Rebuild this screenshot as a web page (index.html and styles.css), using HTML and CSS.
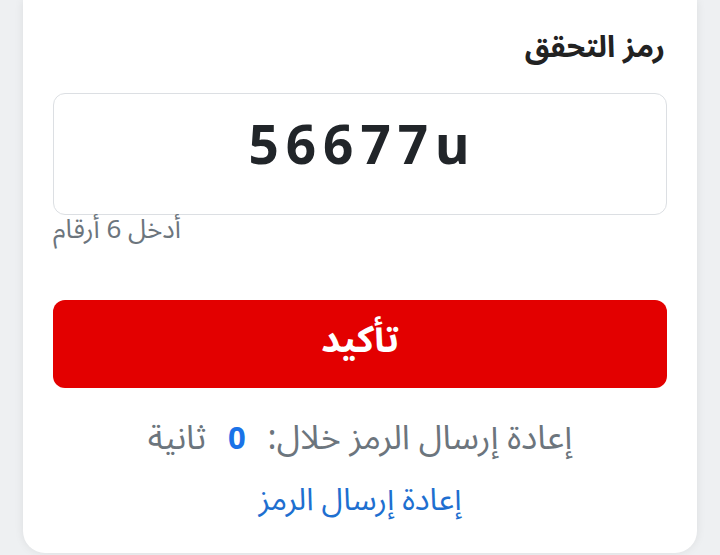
FILE: index.html
```html
<!DOCTYPE html>
<html lang="ar" dir="rtl">
<head>
<meta charset="utf-8">
<title>رمز التحقق</title>
<link rel="stylesheet" href="styles.css">
</head>
<body>
<main class="page">
  <section class="card">
    <label class="label" for="otp">رمز التحقق</label>
    <div class="otp-box">
      <input id="otp" class="otp-input" type="text" value="56677u" dir="ltr">
    </div>
    <div class="hint">أدخل 6 أرقام</div>
    <button class="confirm" type="button">تأكيد</button>
    <p class="timer">إعادة إرسال الرمز خلال: <span class="count">0</span> ثانية</p>
    <a class="resend" href="#">إعادة إرسال الرمز</a>
  </section>
</main>
</body>
</html>
```
FILE: styles.css
```css
* { box-sizing: border-box; }
html, body { margin: 0; padding: 0; }
body {
  background: #eef0f2;
  font-family: "Noto Sans Arabic", "Noto Sans", "DejaVu Sans", sans-serif;
  height: 555px;
  overflow: hidden;
}
.page {
  padding: 0 23px;
}
.card {
  background: #fff;
  border-radius: 0 0 22px 22px;
  box-shadow: 0 0 10px rgba(0,0,0,0.08);
  height: 553px;
  padding: 26px 30px 0;
  display: flex;
  flex-direction: column;
}
.label {
  font-size: 30px;
  font-weight: 700;
  color: #222;
  line-height: 44px;
  padding-right: 2px;
}
.otp-box {
  margin-top: 23px;
  height: 122px;
  border: 1px solid #dcdfe3;
  border-radius: 12px;
  display: flex;
  align-items: center;
  justify-content: center;
  padding-bottom: 21px;
}
.otp-input {
  border: none;
  outline: none;
  width: 100%;
  text-align: center;
  font-family: "Noto Sans", "Open Sans", sans-serif;
  font-size: 53px;
  font-weight: 700;
  letter-spacing: 7px;
  padding-left: 7px;
  color: #212529;
  background: transparent;
}
.hint {
  align-self: flex-end;
  font-size: 26px;
  color: #6c757d;
  line-height: 30px;
}
.confirm {
  margin-top: 55px;
  height: 88px;
  border: none;
  border-radius: 12px;
  background: #e30000;
  color: #fff;
  font-family: inherit;
  font-size: 37px;
  font-weight: 700;
  padding-bottom: 16px;
}
.timer {
  margin: 19px 0 0;
  text-align: center;
  font-family: "Noto Sans", "Noto Sans Arabic", sans-serif;
  font-size: 34px;
  color: #6c757d;
  line-height: 58px;
}
.count {
  color: #1a73e8;
  font-weight: 700;
  font-family: "Noto Sans", sans-serif;
  font-size: 31px;
  margin: 0 13px;
}
.resend {
  margin-top: 6px;
  align-self: center;
  font-family: "Noto Sans", "Noto Sans Arabic", sans-serif;
  font-size: 31px;
  color: #1e6fd0;
  text-decoration: none;
  line-height: 52px;
}
```
